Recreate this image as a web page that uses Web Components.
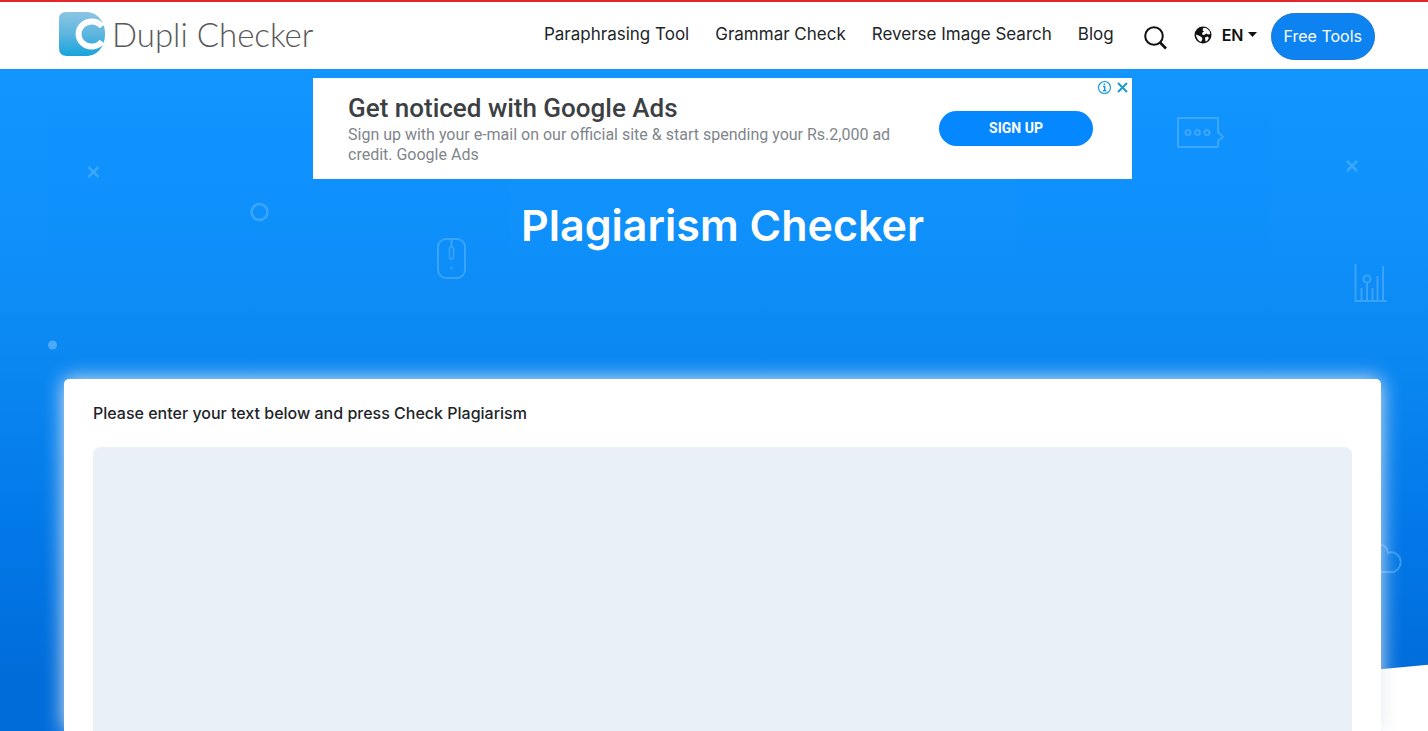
<!DOCTYPE html>
<html lang="en">
<head>
<meta charset="utf-8">
<meta name="viewport" content="width=device-width, initial-scale=1">
<title>Plagiarism Checker</title>
<style>
  body {
    margin: 0;
    min-height: 100vh;
    display: flex;
    flex-direction: column;
    background: #fff;
    color: #212529;
    font-family: Inter, "Liberation Sans", sans-serif;
    font-size: 16px;
  }
</style>
</head>
<body>
<site-header>
  <nav-link href="#paraphrase">Paraphrasing Tool</nav-link>
  <nav-link href="#grammar">Grammar Check</nav-link>
  <nav-link href="#image">Reverse Image Search</nav-link>
  <nav-link href="#blog">Blog</nav-link>
</site-header>
<hero-section>
  <ad-banner slot="ad">
    <span slot="title">Get noticed with Google Ads</span>
    <span slot="text">Sign up with your e-mail on our official site &amp; start spending your Rs.2,000 ad credit. Google Ads</span>
    <span slot="action">SIGN UP</span>
  </ad-banner>
  <span slot="title">Plagiarism Checker</span>
  <checker-card label="Please enter your text below and press Check Plagiarism"></checker-card>
</hero-section>

<script>
class NavLink extends HTMLElement {
    constructor() {
        super();
        this.attachShadow({ mode: 'open' });
        this.shadowRoot.innerHTML = `
        <style>
          :host { display: block; white-space: nowrap; }
          a { color: #212529; text-decoration: none; font-size: 17px; line-height: 46px; }
        </style>
        <a href="${this.getAttribute('href')}"><slot></slot></a>
      `;
    }
}

class SiteLogo extends HTMLElement {
    constructor() {
        super();
        this.attachShadow({ mode: 'open' });
        this.shadowRoot.innerHTML = `
        <style>
          :host { display: block; }
          a {
            display: flex;
            align-items: center;
            gap: 6px;
            color: #58585a;
            text-decoration: none;
            font: 300 33px/46px Lato, "Liberation Sans", sans-serif;
            white-space: nowrap;
          }
          svg { display: block; }
        </style>
        <a href="#home">
          <svg width="47" height="46" viewBox="0 0 47 46" aria-hidden="true">
            <defs>
              <linearGradient id="tile" x1="0" y1="0" x2="0" y2="1">
                <stop offset="0" stop-color="#8cc5e4"/>
                <stop offset=".5" stop-color="#5db6df"/>
                <stop offset="1" stop-color="#17a3dc"/>
              </linearGradient>
            </defs>
            <path d="M7 1H27C38 1 46 10 46 23S38 45 27 45H8Q0 45 0 37V8Q0 1 7 1Z" fill="url(#tile)"/>
            <path d="M43 15.500A13 12.500 0 1 0 43 30.500" fill="none" stroke="#fff" stroke-width="6"/>
          </svg>
          <span>Dupli Checker</span>
        </a>
      `;
    }
}

class SiteHeader extends HTMLElement {
    constructor() {
        super();
        this.attachShadow({ mode: 'open' });
        this.shadowRoot.innerHTML = `
        <style>
          :host { display: block; border-top: 2px solid #e3242b; background: #fff; }
          header {
            display: flex;
            align-items: flex-start;
            justify-content: space-between;
            min-height: 49px;
            padding: 9px 53px 9px 59px;
          }
          nav, .tools { display: flex; align-items: center; }
          nav { gap: 26px; margin-left: auto; }
          .tools { align-self: flex-end; }
          button {
            border: 0;
            padding: 0;
            background: none;
            font: inherit;
            color: #111;
            cursor: pointer;
          }
          svg { display: block; }
          .search { margin: 0 26px 0 30px; }
          .lang {
            display: flex;
            align-items: center;
            gap: 10px;
            margin: 0 14px 4px 0;
            font-weight: 600;
          }
          .code { display: flex; align-items: center; gap: 4px; }
          .free {
            height: 47px;
            padding: 0 12px 2px;
            border: 1px solid #1b78d6;
            border-radius: 24px;
            background: #0c83f0;
            color: #fff;
            white-space: nowrap;
          }
        </style>
        <header>
          <site-logo></site-logo>
          <nav><slot></slot></nav>
          <div class="tools">
            <button class="search" aria-label="Search">
              <svg width="24" height="26" viewBox="0 0 24 26" fill="none" stroke="#111" stroke-width="2">
                <circle cx="10" cy="12" r="8.800"/>
                <path d="M16 18.500L22 24.500" stroke-width="2.600"/>
              </svg>
            </button>
            <button class="lang">
              <svg width="18" height="18" viewBox="0 0 18 18" aria-hidden="true">
                <circle cx="9" cy="9" r="8.500" fill="#111"/>
                <path d="M9.500 1.800L12.500 2.200L15.500 5L16.300 8L14 8.500L12.500 7.500L10 9L8 8.500L8.500 6.500L10 5.500L8.500 4Z" fill="#fff"/>
                <path d="M1.800 8.500L4.500 9.500L7.500 11L8.500 13L7 16Q3 14.500 1.800 8.500Z" fill="#fff"/>
                <path d="M11 11.500L13.500 10.500L15 12L13 15L11.500 15.500Z" fill="#fff"/>
              </svg>
              <span class="code">EN
                <svg width="9" height="5" viewBox="0 0 9 5" aria-hidden="true"><path d="M0 0H9L4.500 5Z" fill="#111"/></svg>
              </span>
            </button>
            <button class="free">Free Tools</button>
          </div>
        </header>
      `;
    }
}

class AdBanner extends HTMLElement {
    constructor() {
        super();
        this.attachShadow({ mode: 'open' });
        this.shadowRoot.innerHTML = `
        <style>
          :host {
            position: relative;
            display: block;
            box-sizing: border-box;
            width: 100%;
            max-width: 819px;
            background: #fff;
            font-family: Roboto, "Liberation Sans", sans-serif;
          }
          .body {
            display: flex;
            align-items: center;
            justify-content: space-between;
            gap: 40px;
            padding: 13px 39px 14px 35px;
          }
          .copy { max-width: 550px; }
          h2 { margin: 0; font-size: 26px; font-weight: 500; line-height: 34px; color: #3c4043; }
          p { margin: 0; font-size: 16px; line-height: 20px; color: #80868b; }
          .action {
            flex: none;
            width: 154px;
            height: 35px;
            border: 0;
            border-radius: 18px;
            background: #0587ff;
            color: #fff;
            font: bold 14px Roboto, "Liberation Sans", sans-serif;
          }
          .marks {
            position: absolute;
            top: 2px;
            right: 3px;
            display: flex;
            gap: 4px;
          }
          .marks button { padding: 0; border: 0; background: none; }
          svg { display: block; }
        </style>
        <div class="body">
          <div class="copy">
            <h2><slot name="title"></slot></h2>
            <p><slot name="text"></slot></p>
          </div>
          <button class="action"><slot name="action"></slot></button>
        </div>
        <div class="marks">
          <button aria-label="About this ad">
            <svg width="15" height="15" viewBox="0 0 15 15" fill="none" stroke="#1a9bd0">
              <circle cx="7.500" cy="7.500" r="6" stroke-width="1.200"/>
              <path d="M6 6.500H7.700V10.500M6 10.700H9.300M7.400 3.500V5" stroke-width="1.500"/>
            </svg>
          </button>
          <button aria-label="Close ad">
            <svg width="13" height="15" viewBox="0 0 13 15"><path d="M2 3L11 12M11 3L2 12" stroke="#1a9bd0" stroke-width="2"/></svg>
          </button>
        </div>
      `;
    }
}

// faint line drawings scattered over the blue area
class HeroBackdrop extends HTMLElement {
    constructor() {
        super();
        this.attachShadow({ mode: 'open' });
        this.shadowRoot.innerHTML = `
        <style>
          :host {
            position: absolute;
            inset: 0;
            overflow: hidden;
            background: linear-gradient(#1295ff 0%, #0f90fb 24%, #0b88f2 43%, #0278e8 70%, #006cda 92%);
            clip-path: polygon(0 0, 100% 0, 100% 90%, 0 110%);
          }
          svg { display: block; width: 100%; height: 100%; }
          g { fill: none; stroke: #6fc0ff; stroke-width: 2; opacity: .45; }
        </style>
        <svg viewBox="0 69 1428 662" preserveAspectRatio="xMidYMin slice" aria-hidden="true">
          <g>
            <path d="M88.500 167L98.500 177M98.500 167L88.500 177" stroke-width="2.500"/>
            <circle cx="259.500" cy="212" r="8" stroke-width="2.500"/>
            <rect x="438" y="239" width="27" height="39" rx="8"/>
            <path d="M451.500 239V247"/>
            <rect x="449.500" y="247" width="4" height="12" rx="2" stroke-width="1.500"/>
            <circle cx="451.500" cy="268" r="1" stroke-width="1"/>
            <circle cx="52.500" cy="345" r="4.500" fill="#9dd3ff" stroke="none"/>
            <path d="M1178 118H1218V132L1223 137L1218 141V147H1178Z"/>
            <circle cx="1188" cy="132.500" r="2.500"/>
            <circle cx="1197.500" cy="132.500" r="2.500"/>
            <circle cx="1207" cy="132.500" r="2.500"/>
            <path d="M1347 161L1357 171M1357 161L1347 171" stroke-width="2.500"/>
            <path d="M1355.500 264V301H1387"/>
            <circle cx="1367" cy="279" r="3.500"/>
            <path d="M1361.500 301V288M1367 301V283M1372.500 301V288M1377.500 301V276M1383 301V266"/>
            <path d="M1378 545Q1386 543 1388 553Q1395 550 1400 558Q1403 567 1394 572H1378"/>
          </g>
        </svg>
      `;
    }
}

class CheckerCard extends HTMLElement {
    constructor() {
        super();
        this.attachShadow({ mode: 'open' });
        this.shadowRoot.innerHTML = `
        <style>
          :host {
            box-sizing: border-box;
            display: flex;
            flex-direction: column;
            gap: 22px;
            padding: 22px 29px 0;
            border-radius: 5px 5px 0 0;
            background: #fff;
            box-shadow: 0 0 20px #e6e9f0;
          }
          label { font-weight: 500; line-height: 24px; }
          textarea {
            flex: 1;
            display: block;
            box-sizing: border-box;
            width: 100%;
            min-height: 240px;
            padding: 16px;
            border: 0;
            border-radius: 8px 8px 0 0;
            background: #eaf0f7;
            font: inherit;
            resize: none;
            outline: 0;
          }
        </style>
        <label for="content">${this.getAttribute('label')}</label>
        <textarea id="content"></textarea>
      `;
    }
}

class HeroSection extends HTMLElement {
    constructor() {
        super();
        this.attachShadow({ mode: 'open' });
        this.shadowRoot.innerHTML = `
        <style>
          :host {
            position: relative;
            flex: 1;
            display: flex;
            flex-direction: column;
            overflow: hidden;
          }
          main {
            position: relative;
            flex: 1;
            display: flex;
            flex-direction: column;
            align-items: center;
            padding: 9px 47px 0 64px;
          }
          h1 {
            margin: 16px 0 124px;
            color: #fff;
            font-size: 43px;
            font-weight: 600;
            line-height: 60px;
            text-align: center;
          }
          slot:not([name])::slotted(*) { flex: 1; align-self: stretch; }
        </style>
        <hero-backdrop></hero-backdrop>
        <main>
          <slot name="ad"></slot>
          <h1><slot name="title"></slot></h1>
          <slot></slot>
        </main>
      `;
    }
}

customElements.define('nav-link', NavLink);
customElements.define('site-logo', SiteLogo);
customElements.define('site-header', SiteHeader);
customElements.define('ad-banner', AdBanner);
customElements.define('hero-backdrop', HeroBackdrop);
customElements.define('checker-card', CheckerCard);
customElements.define('hero-section', HeroSection);
</script>
</body>
</html>
